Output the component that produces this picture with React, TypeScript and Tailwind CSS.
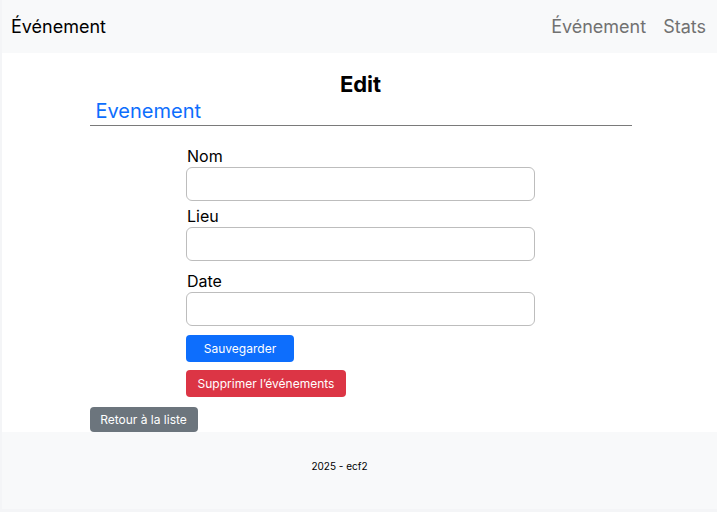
export default function App() {
  return (
    <div className="min-h-[512px] bg-[#f4f5f7] pl-[2px] font-['Inter',sans-serif] text-black">
      {/* NAVBAR */}
      <nav className="flex h-[53px] items-center justify-between bg-[#f8f9fa] pl-[9px] pr-[11px]">
        <span className="text-[18px] text-black">Événement</span>
        <div className="flex gap-[17px] text-[18px] text-[#717171]">
          <span>Événement</span>
          <span>Stats</span>
        </div>
      </nav>

      {/* CONTENT */}
      <main className="h-[379px] bg-white pt-[17px]">
        <div className="mx-auto w-[542px] translate-x-[1px]">
          <h1 className="text-center text-[22px] font-bold leading-[28px]">Edit</h1>
          <h2 className="pl-[6px] text-[20px] leading-[26px] text-[#0d6efd]">Evenement</h2>
          <hr className="mt-[1px] border-t border-[#7a7a7a]" />

          <form className="mx-auto mt-[19px] w-[349px] text-[16px]">
            <label className="block pl-[1px] leading-[22px]">Nom</label>
            <input className="block h-[34px] w-full rounded-[6px] border border-[#bdbdbd]" />

            <label className="mt-[4px] block pl-[1px] leading-[22px]">Lieu</label>
            <input className="block h-[34px] w-full rounded-[6px] border border-[#bdbdbd]" />

            <label className="mt-[9px] block pl-[1px] leading-[22px]">Date</label>
            <input className="block h-[34px] w-full rounded-[6px] border border-[#bdbdbd]" />

            <button
              type="button"
              className="mt-[9px] block h-[27px] w-[108px] rounded-[4px] bg-[#0d6efd] text-[12px] text-white"
            >
              Sauvegarder
            </button>
            <button
              type="button"
              className="mt-[8px] block h-[27px] w-[160px] rounded-[4px] bg-[#dc3545] text-[12px] text-white"
            >
              Supprimer l’événements
            </button>
          </form>

          <button
            type="button"
            className="mt-[10px] block h-[25px] w-[108px] rounded-[4px] bg-[#6c757d] text-[12px] text-white"
          >
            Retour à la liste
          </button>
        </div>
      </main>

      {/* FOOTER */}
      <footer className="flex h-[77px] justify-center bg-[#f8f9fa] pr-[40px] pt-[27px] text-[10px] leading-[14px]">
        2025 - ecf2
      </footer>
    </div>
  );
}
